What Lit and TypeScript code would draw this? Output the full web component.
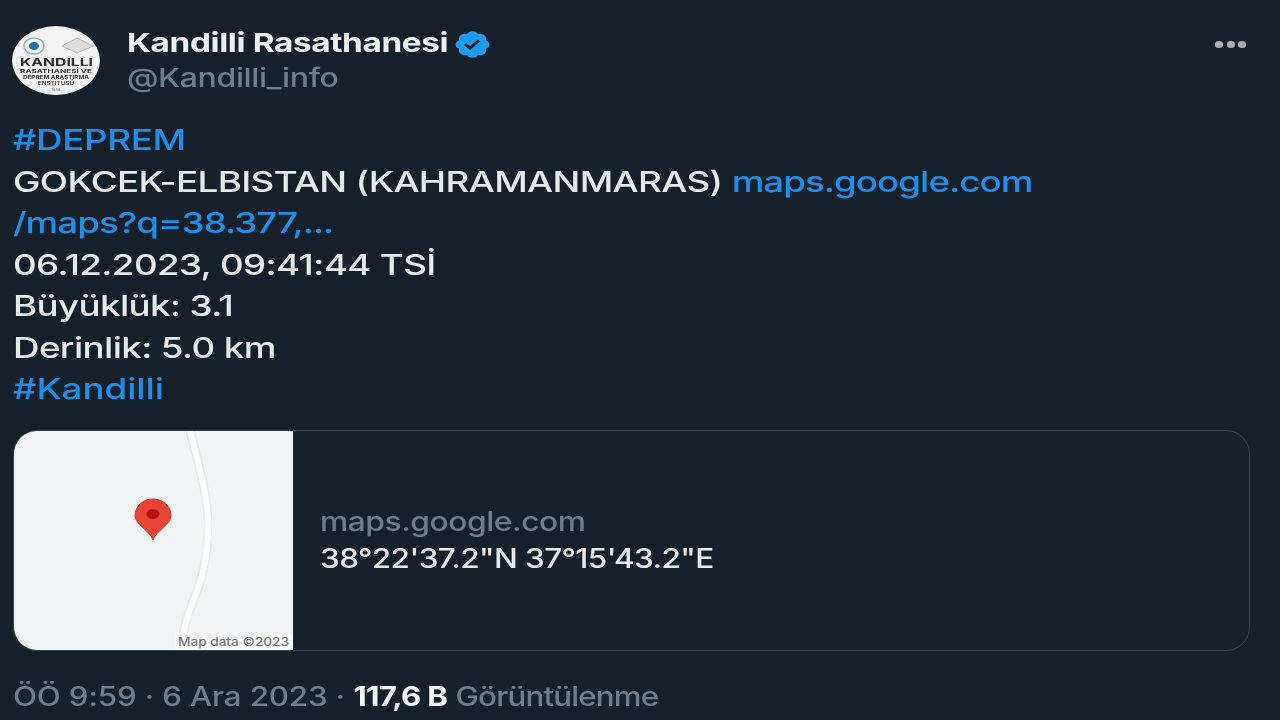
import { LitElement, html, css } from "lit";
import { customElement } from "lit/decorators.js";

@customElement("app-root")
export class AppRoot extends LitElement {
  static styles = css`
    :host { display: block; width: 1280px; height: 720px; overflow: hidden; background: #15202b; color: #e7e9ea; font-family: Inter, "Liberation Sans", sans-serif; }
    .page { display: flex; flex-direction: column; padding: 26px 30px 0 13px; height: 720px; box-sizing: border-box; }
    .head { display: flex; height: 69px; }
    .avatar { width: 88px; height: 69px; margin-left: -1px; flex: none; filter: blur(0.6px); }
    .who { margin-left: 27px; display: flex; flex-direction: column; }
    .name { display: flex; align-items: center; gap: 3px; font-size: 26px; font-weight: 700; line-height: 34px; height: 34px; color: #eef0f1; letter-spacing: -0.3px; transform: scaleX(1.282); transform-origin: left center; white-space: nowrap; }
    .badge { width: 31px; height: 31px; flex: none; margin-top: 2px; }
    .handle { font-size: 26px; font-weight: 500; line-height: 34px; height: 34px; margin-top: 1px; color: #6f7d8a; letter-spacing: -0.3px; transform: scaleX(1.232); transform-origin: left center; white-space: nowrap; }
    .more { margin-left: auto; margin-top: 15px; margin-right: 4px; display: flex; gap: 3.5px; height: 7px; }
    .more i { width: 8px; height: 6.500px; border-radius: 50%; background: #a5adb5; }
    .body { margin-top: 24px; font-size: 29px; font-weight: 500; line-height: 41.5px; letter-spacing: -0.5px; transform: scaleX(1.2675); transform-origin: left center; width: 900px; white-space: nowrap; }
    .link { color: #1d8fe6; }
    .narrow { letter-spacing: -0.76px; }
    .open { letter-spacing: -0.3px; }
    .wide { letter-spacing: -0.05px; }
    .card { margin-top: 20px; width: 1237px; height: 221px; box-sizing: border-box; border: 1px solid #38444d; border-radius: 24px; display: flex; overflow: hidden; }
    .map { width: 279px; height: 219px; flex: none; display: block; }
    .info { flex: 1; display: flex; flex-direction: column; justify-content: center; padding-left: 27px; }
    .host { font-size: 26.5px; font-weight: 500; line-height: 37px; color: #6f7d8a; letter-spacing: -0.4px; transform: scaleX(1.2); transform-origin: left center; }
    .title { font-size: 26.5px; font-weight: 500; line-height: 37px; color: #e7e9ea; letter-spacing: -0.5px; transform: scaleX(1.188); transform-origin: left center; }
    .foot { margin-top: 27px; font-size: 26.5px; font-weight: 500; line-height: 36px; color: #6f7d8a; letter-spacing: -0.12px; white-space: nowrap; transform: scaleX(1.18); transform-origin: left center; width: 600px; }
    .foot b { color: #f2f4f5; font-weight: 700; letter-spacing: -0.6px; }
    .views { letter-spacing: -0.7px; }
  `;

  render() {
    return html`<div class="page">
      <div class="head">
        <svg class="avatar" viewBox="0 0 88 69">
          <ellipse cx="44" cy="34.5" rx="44" ry="34.5" fill="#f2f2f2"/>
          <ellipse cx="22" cy="20" rx="10" ry="8" fill="#fff" stroke="#8fb3d3" stroke-width="1.5"/>
          <ellipse cx="22" cy="20" rx="5" ry="4" fill="#1f6fae"/>
          <path d="M50 20 L65 12 L81 20 L65 27 Z" fill="#dcdcdc" stroke="#b5b5b5"/>
          <text x="44.5" y="39.500" text-anchor="middle" font-family="Inter" font-size="11" font-weight="700" fill="#2b2b2b" textLength="73" lengthAdjust="spacingAndGlyphs">KANDILLI</text>
          <text x="44" y="46.500" text-anchor="middle" font-family="Inter" font-size="5" font-weight="700" fill="#333" textLength="72" lengthAdjust="spacingAndGlyphs">RASATHANESİ VE</text>
          <text x="44" y="52.500" text-anchor="middle" font-family="Inter" font-size="5" font-weight="700" fill="#333" textLength="66" lengthAdjust="spacingAndGlyphs">DEPREM ARAŞTIRMA</text>
          <text x="44" y="58.500" text-anchor="middle" font-family="Inter" font-size="5" font-weight="600" fill="#444" textLength="36" lengthAdjust="spacingAndGlyphs">ENSTİTÜSÜ</text>
          <text x="44" y="64.500" text-anchor="middle" font-family="Inter" font-size="4" fill="#666">1868</text>
        </svg>
        <div class="who">
          <div class="name">Kandilli Rasathanesi
            <svg class="badge" viewBox="0 0 22 22" preserveAspectRatio="none"><path fill="#1d9bf0" d="M20.396 11c-.018-.646-.215-1.275-.57-1.816-.354-.54-.852-.972-1.438-1.246.223-.607.27-1.264.14-1.897-.131-.634-.437-1.218-.882-1.687-.47-.445-1.053-.75-1.687-.882-.633-.13-1.29-.083-1.897.14-.273-.587-.704-1.086-1.245-1.44S11.647 1.62 11 1.604c-.646.017-1.273.213-1.813.568s-.969.854-1.24 1.44c-.608-.223-1.267-.272-1.902-.14-.635.13-1.22.436-1.69.882-.445.47-.749 1.055-.878 1.688-.13.633-.08 1.29.144 1.896-.587.274-1.087.705-1.443 1.245-.356.54-.555 1.17-.574 1.817.02.647.218 1.276.574 1.817.356.54.856.972 1.443 1.245-.224.606-.274 1.263-.144 1.896.13.634.433 1.218.877 1.688.47.443 1.054.747 1.687.878.633.132 1.29.084 1.897-.136.274.586.705 1.084 1.246 1.439.54.354 1.17.551 1.816.569.647-.016 1.276-.213 1.817-.567s.972-.854 1.245-1.44c.604.239 1.266.296 1.903.164.636-.132 1.22-.447 1.68-.907.46-.46.776-1.044.908-1.681s.075-1.299-.165-1.903c.586-.274 1.084-.705 1.439-1.246.354-.54.551-1.17.569-1.816zM9.662 14.85l-3.429-3.428 1.293-1.302 2.072 2.072 4.4-4.794 1.347 1.246z"/></svg>
          </div>
          <div class="handle">@Kandilli_info</div>
        </div>
        <div class="more"><i></i><i></i><i></i></div>
      </div>
      <div class="body">
        <div class="link open">#DEPREM</div>
        <div>GOKCEK-ELBISTAN (KAHRAMANMARAS) <span class="link narrow">maps.google.com</span></div>
        <div class="link narrow">/maps?q=38.377,...</div>
        <div>06.12.2023, 09:41:44 TSİ</div>
        <div>Büyüklük: 3.1</div>
        <div>Derinlik: 5.0 km</div>
        <div class="link wide">#Kandilli</div>
      </div>
      <div class="card">
        <svg class="map" viewBox="0 0 279 219">
          <rect width="279" height="219" fill="#f1f3f4"/>
          <path d="M176 0 C182 25 194 62 194 92 C194 128 188 148 180 168 C174 182 170 194 166 219" fill="none" stroke="#e6e8e9" stroke-width="9"/>
          <path d="M176 0 C182 25 194 62 194 92 C194 128 188 148 180 168 C174 182 170 194 166 219" fill="none" stroke="#fff" stroke-width="6"/>
          <rect x="161" y="203" width="118" height="16" fill="#f7f7f7"/>
          <text x="164" y="214.500" font-family="Inter" font-size="11.5" font-weight="500" fill="#777" textLength="111" lengthAdjust="spacingAndGlyphs">Map data ©2023</text>
          <path d="M139 109 C136 100 121 93 121 85 C121 75 129 68 139 68 C149 68 157 75 157 85 C157 93 142 100 139 109 Z" fill="#e94335" stroke="#c5392c" stroke-width="1"/>
          <ellipse cx="139" cy="83" rx="6.500" ry="5" fill="#b3141a"/>
        </svg>
        <div class="info">
          <div class="host">maps.google.com</div>
          <div class="title">38°22'37.2"N 37°15'43.2"E</div>
        </div>
      </div>
      <div class="foot">ÖÖ 9:59 · 6 Ara 2023 · <b>117,6 B</b> <span class="views">Görüntülenme</span></div>
    </div>`;
  }
}
